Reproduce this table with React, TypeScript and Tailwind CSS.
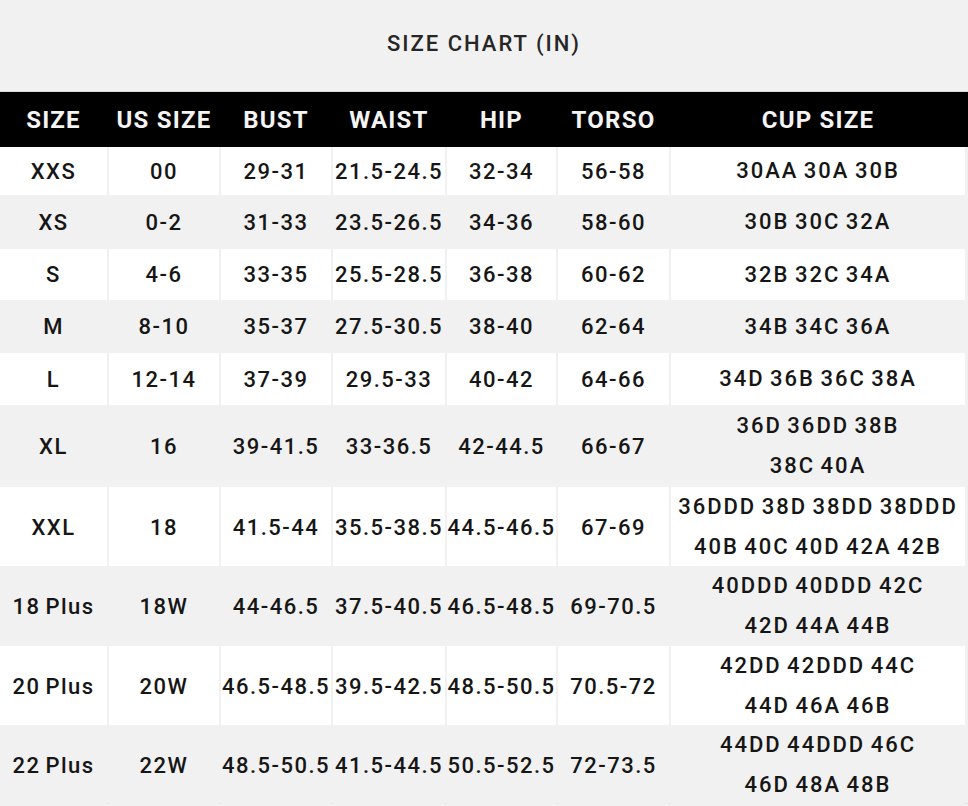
import React from 'react';

const cols = 'grid grid-cols-[107px_110px_110px_112px_109px_111px_294px] gap-x-[2px]';

const headers = ['SIZE', 'US SIZE', 'BUST', 'WAIST', 'HIP', 'TORSO', 'CUP SIZE'];

const rows: { cells: string[]; cup: string[]; h: string }[] = [
  { cells: ['XXS', '00', '29-31', '21.5-24.5', '32-34', '56-58'], cup: ['30AA 30A 30B'], h: 'h-[48px]' },
  { cells: ['XS', '0-2', '31-33', '23.5-26.5', '34-36', '58-60'], cup: ['30B 30C 32A'], h: 'h-[54px]' },
  { cells: ['S', '4-6', '33-35', '25.5-28.5', '36-38', '60-62'], cup: ['32B 32C 34A'], h: 'h-[51px]' },
  { cells: ['M', '8-10', '35-37', '27.5-30.5', '38-40', '62-64'], cup: ['34B 34C 36A'], h: 'h-[53px]' },
  { cells: ['L', '12-14', '37-39', '29.5-33', '40-42', '64-66'], cup: ['34D 36B 36C 38A'], h: 'h-[52px]' },
  { cells: ['XL', '16', '39-41.5', '33-36.5', '42-44.5', '66-67'], cup: ['36D 36DD 38B', '38C 40A'], h: 'h-[82px]' },
  { cells: ['XXL', '18', '41.5-44', '35.5-38.5', '44.5-46.5', '67-69'], cup: ['36DDD 38D 38DD 38DDD', '40B 40C 40D 42A 42B'], h: 'h-[79px]' },
  { cells: ['18 Plus', '18W', '44-46.5', '37.5-40.5', '46.5-48.5', '69-70.5'], cup: ['40DDD 40DDD 42C', '42D 44A 44B'], h: 'h-[80px]' },
  { cells: ['20 Plus', '20W', '46.5-48.5', '39.5-42.5', '48.5-50.5', '70.5-72'], cup: ['42DD 42DDD 44C', '44D 46A 46B'], h: 'h-[79px]' },
  { cells: ['22 Plus', '22W', '48.5-50.5', '41.5-44.5', '50.5-52.5', '72-73.5'], cup: ['44DD 44DDD 46C', '46D 48A 48B'], h: 'h-[78px]' },
];

export default function App() {
  return (
    <div className="w-[968px] h-[806px] bg-[#f1f1f1] overflow-hidden font-['Roboto','Liberation_Sans',sans-serif] text-[#161616]">
      <div className="h-[91px] flex items-center justify-center pb-[4px]">
        <h1 className="text-[22px] font-medium tracking-[2px] text-[#262626]">SIZE CHART (IN)</h1>
      </div>

      <div className={`${cols} bg-black h-[56px] border-t border-[#d8d8d8]`}>
        {headers.map((h) => (
          <div key={h} className="flex items-center justify-center text-[24px] font-bold tracking-[1.2px] text-[#f4f4f4] whitespace-nowrap">
            {h}
          </div>
        ))}
      </div>

      {rows.map((row, i) => {
        const cell = i % 2 === 0 ? 'bg-white' : 'bg-[#f1f1f1]';
        return (
          <div key={row.cells[0]} className={`${cols} ${row.h}`}>
            {row.cells.map((c, j) => (
              <div key={j} className={`${cell} flex items-center justify-center text-[22px] font-medium tracking-[1.5px] [word-spacing:-2px] whitespace-nowrap`}>
                {c}
              </div>
            ))}
            <div className={`${cell} flex flex-col items-center justify-center text-[22px] font-medium tracking-[2px] [word-spacing:-2px] leading-[40px] whitespace-nowrap`}>
              {row.cup.map((l) => (
                <span key={l}>{l}</span>
              ))}
            </div>
          </div>
        );
      })}
      <div className="h-px bg-[#e4e4e4]" />
    </div>
  );
}
